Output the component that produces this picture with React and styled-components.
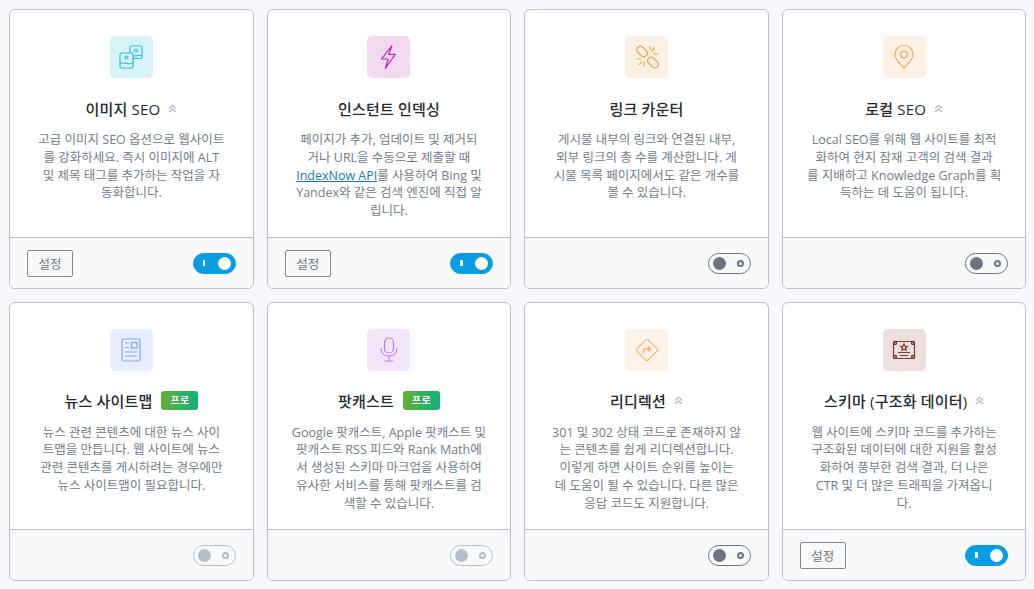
import styled, { createGlobalStyle } from "styled-components";

const GlobalStyle = createGlobalStyle`
  html, body { margin: 0; padding: 0; background: #f7f8fb; }
  body { font-family: "Open Sans", "Noto Sans CJK KR", sans-serif; }
`;

/* styled */

const Grid = styled.div`
  display: grid;
  grid-template-columns: repeat(4, 1fr);
  grid-auto-rows: 279.5px;
  gap: 13.1px;
  width: 1017.3px;
  padding: 9px 0 0 9.1px;
`;

const Card = styled.div`
  display: flex;
  flex-direction: column;
  box-sizing: border-box;
  background: #fff;
  border: 1px solid #b6bfca;
  border-radius: 6px;
  overflow: hidden;
`;

const Body = styled.div`
  flex: 1;
  display: flex;
  flex-direction: column;
  align-items: center;
  padding-top: 26px;
`;

const IconBox = styled.div`
  display: flex;
  align-items: center;
  justify-content: center;
  width: 43px;
  height: 42px;
  border-radius: 5px;
  background: ${(props) => props.$tint};
  color: ${(props) => props.$color};
`;

const Title = styled.h3`
  display: flex;
  align-items: center;
  height: 24px;
  margin: 18px 0 11px;
  font-size: 15px;
  font-weight: 500;
  letter-spacing: 0.2px;
  color: #23282d;
`;

const LevelSvg = styled.svg`
  margin-left: 8px;
  color: #b3bcc7;
`;

const ProBadge = styled.span`
  margin-left: 9px;
  padding: 0 9px;
  line-height: 19px;
  border-radius: 3px;
  background: linear-gradient(90deg, #63b133, #0fb07c);
  color: #fff;
  font-size: 10px;
  font-weight: 700;
`;

const Description = styled.div`
  font-size: 12.5px;
  line-height: 17.75px;
  color: #737c87;
  text-align: center;
`;

const Line = styled.div`
  white-space: nowrap;
`;

const DocLink = styled.span`
  color: #1379b8;
  text-decoration: underline;
`;

const Footer = styled.div`
  display: flex;
  align-items: center;
  height: 49px;
  padding: 1px 17px 0;
  border-top: 1px solid #b6bfca;
  background: #f8f9fb;
`;

const SettingsButton = styled.button`
  box-sizing: border-box;
  width: 46px;
  height: 27px;
  padding: 0;
  border: 1px solid #7e8993;
  border-radius: 2px;
  background: transparent;
  color: #6b7480;
  font-family: inherit;
  font-size: 12.5px;
`;

const toggleColor = (props) => {
  if (props.$on) return "#069de3";
  return props.$disabled ? "#b4bec9" : "#6b7480";
};

const Toggle = styled.div`
  position: relative;
  box-sizing: border-box;
  width: 43px;
  height: 21px;
  margin-left: auto;
  border-radius: 11px;
  color: ${toggleColor};
  border: 1px solid currentColor;
  background: ${(props) => (props.$on ? "currentColor" : "transparent")};
`;

const ToggleMark = styled.span`
  position: absolute;
  box-sizing: border-box;
  ${(props) =>
    props.$on
      ? `left: 9px; top: 6px; width: 2.5px; height: 6px; background: #fff;`
      : `right: 6px; top: 6px; width: 7px; height: 7px; border-radius: 50%; border: 2px solid currentColor;`}
`;

const ToggleKnob = styled.span`
  position: absolute;
  top: 3px;
  width: 13px;
  height: 13px;
  border-radius: 50%;
  ${(props) =>
    props.$on ? `right: 4px; background: #fff;` : `left: 4px; background: currentColor;`}
`;

/* icons */

const ImageIcon = () => (
  <svg width="24" height="24" viewBox="0 0 24 24" fill="none" stroke="currentColor" strokeWidth="1.2">
    <rect x="11" y="1" width="12" height="12.5" rx="1.5" />
    <circle cx="17" cy="5.5" r="1.5" />
    <path d="M14 10.5c3 1.4 5.5-1 9 0" />
    <rect x="1" y="8" width="13" height="15" rx="1.5" fill="#d6f3f9" />
    <circle cx="7.5" cy="12.5" r="1.5" />
    <path d="M1 18.5c4-2 8 2 13-.5" />
  </svg>
);

const BoltIcon = () => (
  <svg width="15" height="24" viewBox="0 0 15 24" fill="none" stroke="currentColor" strokeWidth="1.2" strokeLinejoin="round">
    <path d="M11 .7.3 14h7L4.3 23.3 14.3 9.3H7.7z" />
  </svg>
);

const LinkIcon = () => (
  <svg width="24" height="24" viewBox="0 0 24 24" fill="none" stroke="currentColor" strokeWidth="1.2" strokeLinecap="round">
    <rect x="3.5" y="0.5" width="7" height="12" rx="3.5" transform="rotate(-45 7 6.5)" />
    <rect x="14.5" y="11.5" width="7" height="12" rx="3.5" transform="rotate(-45 18 17.5)" />
    <path d="M14.7 1.7l.4 3M19.3 3l-2.500 3M22.7 9h-4M2 14h3.700M4.300 19.700l2.600-2.600M9.300 20.700v-3" />
  </svg>
);

const PinIcon = () => (
  <svg width="20" height="24" viewBox="0 0 20 24" fill="none" stroke="currentColor" strokeWidth="1.2">
    <path d="M10 23C5 17.5 1 14 1 9.5a9 9 0 0 1 18 0C19 14 15 17.5 10 23z" />
    <circle cx="10" cy="9.5" r="3.4" />
  </svg>
);

const NewsIcon = () => (
  <svg width="20" height="24" viewBox="0 0 20 24" fill="none" stroke="currentColor" strokeWidth="1.2">
    <rect x="1" y="1" width="18" height="22" rx="1.5" />
    <rect x="10.5" y="4.5" width="5.5" height="5.5" />
    <path d="M4 5h4M4 9.5h4M4 14h12M4 18h12" />
  </svg>
);

const MicIcon = () => (
  <svg width="18" height="25" viewBox="0 0 18 25" fill="none" stroke="currentColor" strokeWidth="1.2" strokeLinecap="round">
    <rect x="4.5" y="1" width="9" height="15" rx="4.5" />
    <path d="M1 11.5c0 5 3.5 7.5 8 7.5s8-2.5 8-7.5M9 19v5M5 24h8" />
  </svg>
);

const RedirectIcon = () => (
  <svg width="24" height="24" viewBox="0 0 24 24" fill="none" stroke="currentColor" strokeWidth="1.2" strokeLinejoin="round">
    <rect x="4" y="4" width="16" height="16" rx="2" transform="rotate(45 12 12)" />
    <path d="M8.5 15.5V13a2 2 0 0 1 2-2h5M13 8.5l2.7 2.5-2.7 2.5" strokeWidth="1.5" />
  </svg>
);

const SchemaIcon = () => (
  <svg width="24" height="20" viewBox="0 0 24 20" fill="none" stroke="currentColor" strokeWidth="1.2">
    <path d="M3.5 1.5h17a2 2 0 0 0 2 2v13a2 2 0 0 0-2 2h-17a2 2 0 0 0-2-2v-13a2 2 0 0 0 2-2z" />
    <circle cx="3" cy="3" r="1.6" />
    <circle cx="21" cy="3" r="1.6" />
    <circle cx="3" cy="17" r="1.6" />
    <circle cx="21" cy="17" r="1.6" />
    <path d="m12 4 1 2.2 2.3.2-1.8 1.5.6 2.3-2.1-1.2-2.1 1.2.6-2.3-1.8-1.5 2.3-.2z" />
    <path d="M6 12.5h12M8 15.5h8" />
  </svg>
);

const LevelIcon = () => (
  <LevelSvg width="9" height="9" viewBox="0 0 9 9" fill="none" stroke="currentColor" strokeWidth="1.5">
    <path d="M1 4.5 4.5 1.5 8 4.5M1 8 4.5 5 8 8" />
  </LevelSvg>
);

const cards = [
  {
    title: "이미지 SEO",
    Icon: ImageIcon,
    tint: "#d6f3f9",
    color: "#35bcd8",
    level: true,
    on: true,
    settings: true,
    lines: [
      "고급 이미지 SEO 옵션으로 웹사이트",
      "를 강화하세요. 즉시 이미지에 ALT",
      "및 제목 태그를 추가하는 작업을 자",
      "동화합니다.",
    ],
  },
  {
    title: "인스턴트 인덱싱",
    Icon: BoltIcon,
    tint: "#f1daf0",
    color: "#b92bb5",
    on: true,
    settings: true,
    lines: [
      "페이지가 추가, 업데이트 및 제거되",
      "거나 URL을 수동으로 제출할 때",
      <>
        <DocLink>IndexNow API</DocLink>를 사용하여 Bing 및
      </>,
      "Yandex와 같은 검색 엔진에 직접 알",
      "립니다.",
    ],
  },
  {
    title: "링크 카운터",
    Icon: LinkIcon,
    tint: "#fbf0e2",
    color: "#e5a654",
    lines: [
      "게시물 내부의 링크와 연결된 내부,",
      "외부 링크의 총 수를 계산합니다. 게",
      "시물 목록 페이지에서도 같은 개수를",
      "볼 수 있습니다.",
    ],
  },
  {
    title: "로컬 SEO",
    Icon: PinIcon,
    tint: "#fff0e3",
    color: "#f7a65c",
    level: true,
    lines: [
      "Local SEO를 위해 웹 사이트를 최적",
      "화하여 현지 잠재 고객의 검색 결과",
      "를 지배하고 Knowledge Graph를 획",
      "득하는 데 도움이 됩니다.",
    ],
  },
  {
    title: "뉴스 사이트맵",
    Icon: NewsIcon,
    tint: "#e6eeff",
    color: "#7fa5f5",
    pro: true,
    disabled: true,
    lines: [
      "뉴스 관련 콘텐츠에 대한 뉴스 사이",
      "트맵을 만듭니다. 웹 사이트에 뉴스",
      "관련 콘텐츠를 게시하려는 경우에만",
      "뉴스 사이트맵이 필요합니다.",
    ],
  },
  {
    title: "팟캐스트",
    Icon: MicIcon,
    tint: "#f3e5fc",
    color: "#bb78ea",
    pro: true,
    disabled: true,
    lines: [
      "Google 팟캐스트, Apple 팟캐스트 및",
      "팟캐스트 RSS 피드와 Rank Math에",
      "서 생성된 스키마 마크업을 사용하여",
      "유사한 서비스를 통해 팟캐스트를 검",
      "색할 수 있습니다.",
    ],
  },
  {
    title: "리디렉션",
    Icon: RedirectIcon,
    tint: "#fff2e6",
    color: "#fbb26f",
    level: true,
    lines: [
      "301 및 302 상태 코드로 존재하지 않",
      "는 콘텐츠를 쉽게 리디렉션합니다.",
      "이렇게 하면 사이트 순위를 높이는",
      "데 도움이 될 수 있습니다. 다른 많은",
      "응답 코드도 지원합니다.",
    ],
  },
  {
    title: "스키마 (구조화 데이터)",
    Icon: SchemaIcon,
    tint: "#eedfde",
    color: "#7a3a34",
    level: true,
    on: true,
    settings: true,
    lines: [
      "웹 사이트에 스키마 코드를 추가하는",
      "구조화된 데이터에 대한 지원을 활성",
      "화하여 풍부한 검색 결과, 더 나은",
      "CTR 및 더 많은 트래픽을 가져옵니",
      "다.",
    ],
  },
];

export default function App() {
  return (
    <>
      <GlobalStyle />
      <Grid>
        {cards.map((card) => (
          <Card key={card.title}>
            <Body>
              <IconBox $tint={card.tint} $color={card.color}>
                <card.Icon />
              </IconBox>
              <Title>
                {card.title}
                {card.level && <LevelIcon />}
                {card.pro && <ProBadge>프로</ProBadge>}
              </Title>
              <Description>
                {card.lines.map((line, i) => (
                  <Line key={i}>{line}</Line>
                ))}
              </Description>
            </Body>
            <Footer>
              {card.settings && <SettingsButton>설정</SettingsButton>}
              <Toggle $on={card.on} $disabled={card.disabled}>
                <ToggleMark $on={card.on} />
                <ToggleKnob $on={card.on} />
              </Toggle>
            </Footer>
          </Card>
        ))}
      </Grid>
    </>
  );
}
